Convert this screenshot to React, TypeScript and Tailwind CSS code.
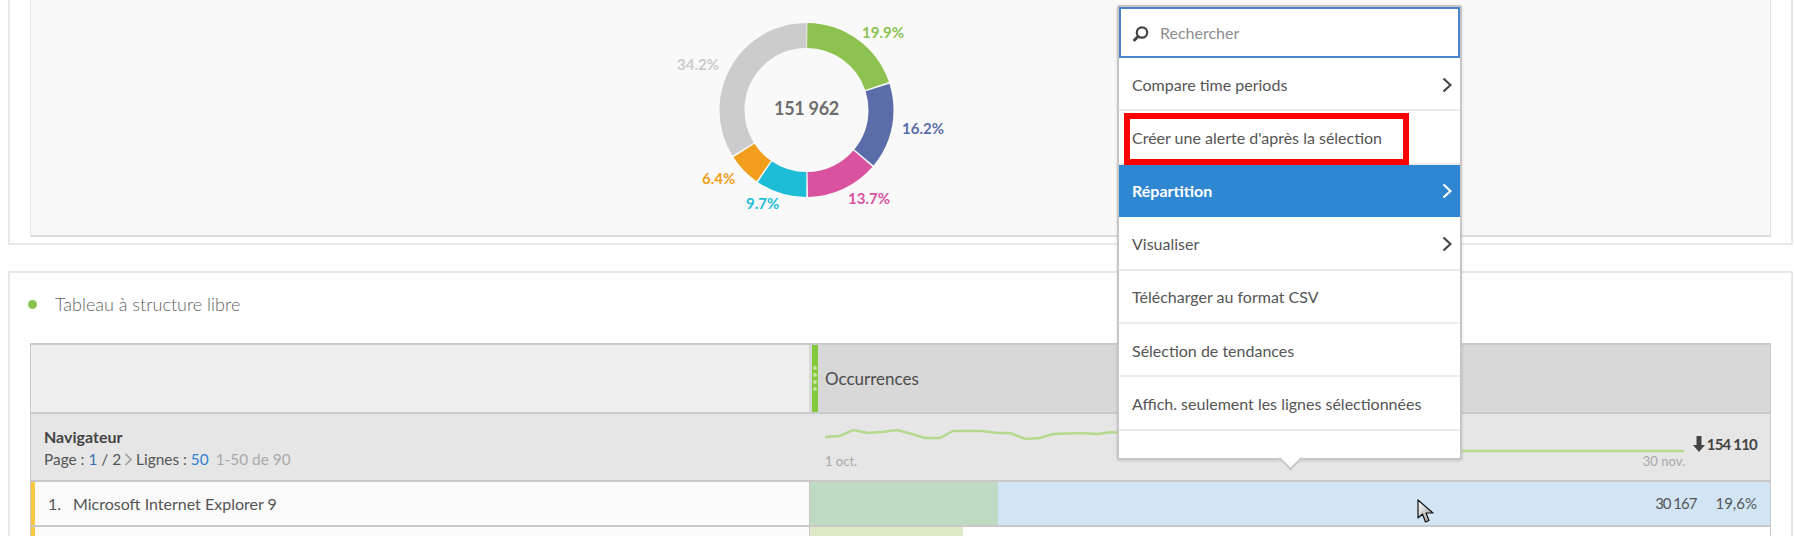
const segments = [
  { pct: 19.9, color: '#8cc250' },
  { pct: 16.2, color: '#5a6da9' },
  { pct: 13.7, color: '#d8529f' },
  { pct: 9.7, color: '#1dbdd7' },
  { pct: 6.4, color: '#f09e1c' },
  { pct: 34.2, color: '#cccccc' },
]

const labels = [
  { text: '19.9%', x: 862, y: 38, color: '#8cc250' },
  { text: '16.2%', x: 902, y: 134, color: '#5a6da9' },
  { text: '13.7%', x: 848, y: 204, color: '#d8529f' },
  { text: '9.7%', x: 746, y: 209, color: '#1dbdd7' },
  { text: '6.4%', x: 702, y: 184, color: '#f09e1c' },
  { text: '34.2%', x: 677, y: 70, color: '#cccccc' },
]

const sparkPoints =
  '0,5 15,4 28,-2 43,1 57,0 72,-2 87,2 100,6 115,6 128,-1 157,-1 172,1 185,1 200,7 215,6 228,2 255,1 272,2 287,0 300,2 635,19 859,19'

const Donut = () => {
  const r = 74.5
  const cx = 806.5
  const cy = 110
  const c = 2 * Math.PI * r
  let offset = 0
  return (
    <svg width={1000} height={236} className="absolute left-0 top-0 block" viewBox="31 0 1000 236">
      {segments.map((s) => {
        const len = (s.pct / 100) * c
        const el = (
          <circle
            key={s.color}
            cx={cx}
            cy={cy}
            r={r}
            fill="none"
            stroke={s.color}
            strokeWidth={25}
            strokeDasharray={`${len - 1.5} ${c - len + 1.5}`}
            strokeDashoffset={-offset - 0.75}
            transform={`rotate(-90 ${cx} ${cy})`}
          />
        )
        offset += len
        return el
      })}
      {labels.map((l) => (
        <text key={l.text} x={l.x} y={l.y} fill={l.color} fontSize={15} fontWeight={700} fontFamily="Lato, sans-serif">
          {l.text}
        </text>
      ))}
      <text x={cx} y={115} textAnchor="middle" fill="#6e6e6e" fontSize={18} fontWeight={700} letterSpacing={-0.3} fontFamily="Lato, sans-serif">
        151 962
      </text>
    </svg>
  )
}

const Chevron = ({ color }: { color: string }) => (
  <svg width={10} height={16} viewBox="0 0 10 16">
    <polyline points="1.5,1.5 8.5,8 1.5,14.5" fill="none" stroke={color} strokeWidth={2.2} />
  </svg>
)

const MenuItem = ({ label, arrow, active }: { label: string; arrow?: boolean; active?: boolean }) => (
  <div
    className={
      active
        ? 'flex h-[52.5px] items-center justify-between bg-[#2f86d1] pl-[13px] pr-[8px] text-[16px] font-bold text-white'
        : 'flex h-[53.4px] items-center justify-between border-b-2 border-[#ececec] pl-[13px] pr-[8px] pt-[2px] text-[16px] text-[#555555]'
    }
  >
    <span>{label}</span>
    {arrow && <Chevron color={active ? '#ffffff' : '#444444'} />}
  </div>
)

const App = () => {
  return (
    <div className="relative h-[536px] w-[1794px] overflow-hidden bg-white font-['Lato',sans-serif]">
      {/* donut panel */}
      <div className="ml-2 mr-[1px] h-[245px] border-2 border-t-0 border-[#e8e8e8] px-5 pb-[7px]">
        <div className="relative h-[237px] border-r border-b-2 border-l border-[#e3e3e3] border-b-[#dcdcdc] bg-[#f9f9f9]">
          <Donut />
        </div>
      </div>

      {/* table panel */}
      <div className="ml-2 mr-[1px] mt-[26px] h-[300px] border-2 border-[#e8e8e8] px-5">
        <div className="flex h-[70px] items-center pb-[8px] text-[18px] font-light text-[#5f5f5f]">
          <span className="ml-[-2px] mr-[18px] h-[9px] w-[9px] rounded-full bg-[#8cc250]" />
          Tableau à structure libre
        </div>

        <div className="border-x border-t-2 border-[#c9c9c9]">
          <div className="grid h-[69px] grid-cols-[778px_1fr] border-b-2 border-[#c9c9c9]">
            <div className="bg-[#eeeeee]" />
            <div className="flex bg-[#d8d8d8]">
              <div className="ml-[3px] flex w-[6px] flex-col items-center justify-center gap-[3px] bg-[#84c83c]">
                <span className="h-[4px] w-[4px] rounded-full bg-[#c4e6a0]" />
                <span className="h-[4px] w-[4px] rounded-full bg-[#c4e6a0]" />
                <span className="h-[4px] w-[4px] rounded-full bg-[#c4e6a0]" />
                <span className="h-[4px] w-[4px] rounded-full bg-[#c4e6a0]" />
              </div>
              <div className="flex items-center pl-[7px] pt-[1px] text-[17px] text-[#4b4b4b]">Occurrences</div>
            </div>
          </div>

          <div className="grid h-[68px] grid-cols-[778px_1fr] border-b-2 border-[#c9c9c9] bg-[#e6e6e6]">
            <div className="pl-[13px] pt-[12px] text-[15.4px] leading-[22px] text-[#555555]">
              <div className="text-[16px] font-bold text-[#444444]">Navigateur</div>
              <div className="flex items-center">
                Page :&nbsp;<span className="text-[#3a6fb5]">1</span>&nbsp;/ 2
                <svg width={9} height={13} viewBox="0 0 9 13" className="ml-[3px] mr-[3px]">
                  <polyline points="1.5,1 7,6.5 1.5,12" fill="none" stroke="#999999" strokeWidth={1.6} />
                </svg>
                Lignes :&nbsp;<span className="text-[#2f7fd0]">50</span>
                <span className="ml-[7px] text-[#aaaaaa]">1-50 de 90</span>
              </div>
            </div>
            <div className="flex justify-between pr-[13px]">
              <div className="w-[876px] pl-[16px]">
                <svg width={860} height={30} viewBox="0 -14 860 30" className="mt-[4px] block overflow-visible">
                  <polyline points={sparkPoints} fill="none" stroke="#b5d98e" strokeWidth={2.5} />
                </svg>
                <div className="mt-[5px] flex justify-between text-[13px] leading-4 text-[#a8a8a8]">
                  <span>1 oct.</span>
                  <span>30 nov.</span>
                </div>
              </div>
              <div className="flex items-center pb-[6px] text-[15px] font-bold tracking-[-0.8px] text-[#444444]">
                <svg width={12} height={16} viewBox="0 0 12 16" className="mr-[2px]">
                  <path d="M3.5 0h5v9H12l-6 7-6-7h3.5z" fill="#444444" />
                </svg>
                154 110
              </div>
            </div>
          </div>

          <div className="grid h-[45px] grid-cols-[778px_1fr] border-b-2 border-[#c9c9c9]">
            <div className="flex items-center border-l-4 border-[#fcc83f] bg-[#fafafa] text-[16px] text-[#555555]">
              <span className="w-[38px] pl-[13px]">1.</span>
              <span>Microsoft Internet Explorer 9</span>
            </div>
            <div className="flex border-l border-[#c9c9c9]">
              <div className="w-[188px] bg-[#bfdac3]" />
              <div className="flex flex-1 items-center justify-end gap-[19px] bg-[#d2e5f5] pr-[13px] text-[15px] text-[#555555]">
                <span className="tracking-[-1px]">30 167</span>
                <span>19,6%</span>
              </div>
            </div>
          </div>

          <div className="grid h-[45px] grid-cols-[778px_1fr]">
            <div className="border-l-4 border-[#fcc83f] bg-[#fafafa]" />
            <div className="flex border-l border-[#c9c9c9] bg-white">
              <div className="w-[153px] bg-[#dde8c6]" />
            </div>
          </div>
        </div>
      </div>

      {/* context menu */}
      <div className="absolute left-[1117px] top-[5px] h-[455px] w-[345px] rounded-[2px] border-2 border-[#c6c6c6] bg-white shadow-[0_1px_3px_rgba(0,0,0,0.15)]">
        <div className="flex h-[51px] items-center border-2 border-[#4a83cc] pl-[12px] text-[16px] text-[#8e8e8e]">
          <svg width={18} height={18} viewBox="0 0 18 18" className="mr-[9px]">
            <circle cx={9} cy={8.5} r={5.2} fill="none" stroke="#444444" strokeWidth={2.2} />
            <path d="M5 12.5 1.5 16" stroke="#444444" strokeWidth={3} strokeLinecap="round" />
          </svg>
          Rechercher
        </div>
        <MenuItem label="Compare time periods" arrow />
        <div className="relative">
          <MenuItem label="Créer une alerte d'après la sélection" />
          <div className="absolute left-[5px] top-[1.6px] h-[52px] w-[285px] border-[6px] border-[#ff0000]" />
        </div>
        <MenuItem label="Répartition" arrow active />
        <MenuItem label="Visualiser" arrow />
        <MenuItem label="Télécharger au format CSV" />
        <MenuItem label="Sélection de tendances" />
        <MenuItem label="Affich. seulement les lignes sélectionnées" />
        <div className="absolute left-1/2 top-[443px] h-[17px] w-[17px] -translate-x-[8px] rotate-45 border-r-2 border-b-2 border-[#c6c6c6] bg-white" />
      </div>

      {/* mouse cursor */}
      <svg width={17} height={26} viewBox="0 0 17 26" className="absolute left-[1417px] top-[499px]">
        <defs>
          <linearGradient id="cursorFill" x1="0" y1="0" x2="1" y2="1">
            <stop offset="0" stopColor="#ffffff" />
            <stop offset="1" stopColor="#999999" />
          </linearGradient>
        </defs>
        <path d="M1 1v18l4.5-4 3 8 3.5-1.5-3-7.5H16z" fill="url(#cursorFill)" stroke="#111111" strokeWidth={1.2} strokeLinejoin="round" />
      </svg>
    </div>
  )
}

export default App
